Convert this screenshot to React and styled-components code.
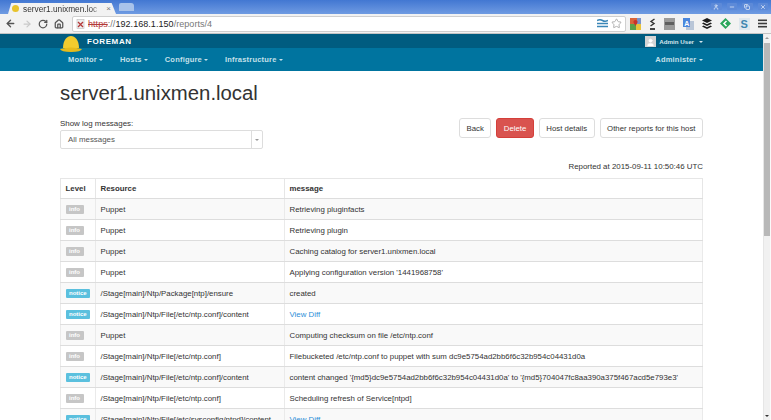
import React from 'react'
import styled, { createGlobalStyle } from 'styled-components'
import { ArrowLeft, ArrowRight, RotateCw, Home, Star, User, Minus, X, Copy } from 'lucide-react'

const Global = createGlobalStyle`
  html, body { margin: 0; padding: 0; height: 420px; overflow: hidden; background: #fff; }
  body { font-family: "Liberation Sans", Arial, sans-serif; }
`

const Window = styled.div`
  width: 771px;
  height: 420px;
  display: flex;
  flex-direction: column;
  overflow: hidden;
`

const TabStrip = styled.div`
  height: 14px;
  flex: none;
  display: flex;
  align-items: flex-end;
  padding-left: 8px;
  background: linear-gradient(#4277d2, #6f9be2);
`

const Tab = styled.div`
  width: 108px;
  height: 11px;
  display: flex;
  align-items: center;
  gap: 4px;
  padding: 0 5px 0 4px;
  box-sizing: border-box;
  background: #f2f2f2;
  border-radius: 4px 5px 0 0;
  clip-path: polygon(0 100%, 3% 0, 96% 0, 100% 100%);
  font-size: 8.3px;
  color: #333;
  white-space: nowrap;
`

const TabTitle = styled.span`
  flex: 1;
  overflow: hidden;
  -webkit-mask-image: linear-gradient(90deg, #000 85%, transparent);
  mask-image: linear-gradient(90deg, #000 85%, transparent);
`

const TabDot = styled.i`
  width: 7px;
  height: 7px;
  flex: none;
  border-radius: 50%;
  background: #e8c32c;
`

const TabClose = styled.span`
  font-size: 8px;
  color: #777;
`

const NewTab = styled.div`
  width: 15px;
  height: 8px;
  margin: 0 0 3px 3px;
  border-radius: 2px 3px 0 0;
  background: #a9c3ea;
`

const WinButtons = styled.div`
  margin-left: auto;
  align-self: flex-start;
  display: flex;
  gap: 5px;
  padding: 3px 3px 0 0;
  color: #dfe8f7;
`

const WinButton = styled.div`
  width: 10.5px;
  height: 7px;
  display: flex;
  align-items: center;
  justify-content: center;
  border-radius: 1px;
  background: #5d8ad8;
`

const Toolbar = styled.div`
  height: 20px;
  flex: none;
  display: flex;
  align-items: center;
  padding: 0 4px 0 5px;
  background: #f2f2f2;
  border-bottom: 1px solid #c4c4c4;
  box-sizing: border-box;
  color: #555;
`

const NavIcons = styled.div`
  display: flex;
  align-items: center;
  gap: 6px;
  width: 67px;
  flex: none;
`

const UrlBar = styled.div`
  width: 554px;
  flex: none;
  height: 16px;
  display: flex;
  align-items: center;
  gap: 3px;
  padding: 0 3px;
  background: #fff;
  border: 1px solid #cfcfcf;
  border-radius: 2px;
  box-sizing: border-box;
  font-size: 9px;
  letter-spacing: 0.05px;
  color: #222;
`

const Strike = styled.span`
  color: #b43a3a;
  text-decoration: line-through;
`

const Path = styled.span`
  color: #777;
`

const UrlEnd = styled.div`
  margin-left: auto;
  display: flex;
  align-items: center;
  gap: 3px;
`

const Extensions = styled.div`
  flex: 1;
  display: flex;
  align-items: center;
  justify-content: space-between;
  padding-left: 4px;
`

const ExtIcon = styled.svg`
  display: block;
  flex: none;
`

const Page = styled.div`
  flex: 1;
  min-height: 0;
  display: flex;
`

const Main = styled.div`
  flex: 1;
  min-width: 0;
  overflow: hidden;
`

const Scrollbar = styled.div`
  width: 8px;
  flex: none;
  display: flex;
  flex-direction: column;
  align-items: stretch;
  background: #f1f1f1;
  border-left: 1px solid #e6e6e6;
  border-right: 1px solid #fafafa;
  box-sizing: border-box;
  color: #444;
`

const ScrollArrow = styled.div`
  height: 9px;
  display: flex;
  align-items: center;
  justify-content: center;
  margin-top: ${p => p.$bottom ? 'auto' : '0'};
  transform: ${p => p.$up ? 'rotate(180deg)' : 'none'};
  color: ${p => p.$up ? '#999' : '#333'};
`

const Thumb = styled.div`
  height: 193px;
  background: #b8b8b8;
`

const TopBar = styled.div`
  height: 14px;
  display: flex;
  align-items: center;
  justify-content: space-between;
  padding: 0 60px;
  background: #005c80;
  color: #fff;
  position: relative;
`

const Helmet = styled.svg`
  position: absolute;
  left: 60px;
  top: 1px;
`

const Brand = styled.span`
  margin-left: 27px;
  font-size: 8px;
  font-weight: 700;
  letter-spacing: 0.6px;
`

const UserBox = styled.div`
  display: flex;
  align-items: center;
  gap: 3px;
  font-size: 6.2px;
  font-weight: 700;
  color: #d5e6ee;
`

const Avatar = styled.div`
  width: 11px;
  height: 11px;
  display: flex;
  align-items: flex-end;
  justify-content: center;
  background: #d4d4d4;
  color: #fff;
`

const Caret = styled.i`
  display: inline-block;
  width: 0;
  height: 0;
  margin-left: ${p => p.$gap ?? 2.5}px;
  vertical-align: middle;
  border-top: 2px solid currentColor;
  border-left: 2px solid transparent;
  border-right: 2px solid transparent;
`

const MenuBar = styled.div`
  height: 23px;
  display: flex;
  align-items: center;
  gap: 16.5px;
  padding: 0 60px 0 68px;
  background: #00749f;
`

const MenuItem = styled.span`
  font-size: 7.5px;
  font-weight: 700;
  letter-spacing: 0.2px;
  color: #c5e0ea;
  &:last-child { margin-left: auto; }
`

const Content = styled.div`
  padding: 0 60px;
`

const Title = styled.h1`
  margin: 0;
  padding-top: 9px;
  font-size: 20.35px;
  line-height: 26px;
  font-weight: 400;
  color: #333;
`

const Controls = styled.div`
  display: flex;
  justify-content: space-between;
  align-items: flex-start;
  margin-top: 12px;
`

const FilterLabel = styled.div`
  font-size: 7.95px;
  line-height: 11px;
  color: #333;
  margin-bottom: 1px;
`

const Select = styled.div`
  width: 203px;
  height: 19px;
  display: flex;
  align-items: center;
  justify-content: space-between;
  box-sizing: border-box;
  border: 1px solid #ddd;
  border-radius: 2px;
  padding-left: 7px;
  font-size: 7.9px;
  color: #555;
`

const SelectArrow = styled.div`
  width: 10px;
  height: 100%;
  display: flex;
  align-items: center;
  justify-content: center;
  border-left: 1px solid #ddd;
  color: #999;
`

const Buttons = styled.div`
  display: flex;
  gap: 5px;
`

const Button = styled.div`
  height: 20px;
  display: flex;
  align-items: center;
  box-sizing: border-box;
  padding: 0 6.5px;
  border: 1px solid ${p => p.$danger ? '#d43f3a' : '#ddd'};
  border-radius: 3px;
  background: ${p => p.$danger ? '#d9534f' : '#fff'};
  color: ${p => p.$danger ? '#fff' : '#333'};
  font-size: 7.8px;
`

const Reported = styled.div`
  margin-top: 12px;
  text-align: right;
  font-size: 7.9px;
  line-height: 11px;
  color: #333;
`

const Table = styled.table`
  width: 643px;
  margin-top: 6px;
  table-layout: fixed;
  border-collapse: collapse;
  font-size: 7.85px;
  color: #333;
`

const Th = styled.th`
  box-sizing: border-box;
  height: 20px;
  padding: 0 4.5px;
  text-align: left;
  font-weight: 700;
  color: #333;
  border: 1px solid #e6e6e6;
  border-bottom-color: #ddd;
  width: ${p => p.$width ? `${p.$width}px` : 'auto'};
`

const Tr = styled.tr`
  background: ${p => p.$odd ? '#f9f9f9' : '#fff'};
`

const Td = styled.td`
  height: 20px;
  padding: 0 4.5px;
  border: 1px solid #eaeaea;
  border-top-color: #ddd;
  border-bottom-color: #ddd;
  white-space: nowrap;
  overflow: hidden;
`

const Badge = styled.span`
  display: inline-block;
  padding: 0 3.5px;
  height: 9px;
  line-height: 9px;
  border-radius: 1px;
  font-size: 6px;
  font-weight: 700;
  color: #fff;
  vertical-align: middle;
  background: ${p => p.$notice ? '#5bc0de' : '#c6c6c6'};
`

const DiffLink = styled.a`
  color: #2f8fd8;
`

const rows = [
  ['info', 'Puppet', 'Retrieving pluginfacts'],
  ['info', 'Puppet', 'Retrieving plugin'],
  ['info', 'Puppet', 'Caching catalog for server1.unixmen.local'],
  ['info', 'Puppet', "Applying configuration version '1441968758'"],
  ['notice', '/Stage[main]/Ntp/Package[ntp]/ensure', 'created'],
  ['notice', '/Stage[main]/Ntp/File[/etc/ntp.conf]/content', 'View Diff'],
  ['info', 'Puppet', 'Computing checksum on file /etc/ntp.conf'],
  ['info', '/Stage[main]/Ntp/File[/etc/ntp.conf]', 'Filebucketed /etc/ntp.conf to puppet with sum dc9e5754ad2bb6f6c32b954c04431d0a'],
  ['notice', '/Stage[main]/Ntp/File[/etc/ntp.conf]/content', "content changed '{md5}dc9e5754ad2bb6f6c32b954c04431d0a' to '{md5}704047fc8aa390a375f467acd5e793e3'"],
  ['info', '/Stage[main]/Ntp/File[/etc/ntp.conf]', 'Scheduling refresh of Service[ntpd]'],
  ['notice', '/Stage[main]/Ntp/File[/etc/sysconfig/ntpd]/content', 'View Diff'],
]

const BrokenLock = () => (
  <ExtIcon width="9" height="10" viewBox="0 0 9 10">
    <rect x="1" y="0.5" width="7" height="9" fill="#eee" stroke="#bbb" strokeWidth="0.6" />
    <path d="M2 3 L7 8 M7 3 L2 8" stroke="#b43a3a" strokeWidth="1.3" />
  </ExtIcon>
)

const Waves = () => (
  <ExtIcon width="11" height="9" viewBox="0 0 11 9" fill="none" stroke="#3a86b7" strokeWidth="1.5">
    <path d="M0 1.5 Q3 0 5.5 1.5 T11 1.5" />
    <path d="M0 4.5 H11" />
    <path d="M0 7.5 H11" />
  </ExtIcon>
)

const MapExt = () => (
  <ExtIcon width="11" height="12" viewBox="0 0 11 12">
    <rect width="11" height="6" fill="#d9653a" />
    <rect y="6" width="6" height="6" fill="#5aa04a" />
    <rect x="6" y="6" width="5" height="6" fill="#e8c33c" />
    <rect x="7" width="4" height="6" fill="#7b94c9" />
    <path d="M5.5 2 A2 2 0 0 1 7.5 4.5 L5.5 8 L3.5 4.5 A2 2 0 0 1 5.5 2 Z" fill="#c8322b" />
  </ExtIcon>
)

const LampExt = () => (
  <ExtIcon width="7" height="12" viewBox="0 0 7 12" fill="none" stroke="#333" strokeWidth="1.4">
    <path d="M5.5 1 L2 3.5 L5 5.5 L1.5 8" />
    <path d="M1 11 H6" strokeWidth="1.8" />
  </ExtIcon>
)

const GrayExt = () => (
  <ExtIcon width="11" height="12" viewBox="0 0 11 12">
    <rect width="11" height="12" fill="#9a9a9a" />
    <rect x="1" y="4" width="9" height="3" fill="#5f5f5f" />
  </ExtIcon>
)

const TranslateExt = () => (
  <ExtIcon width="11" height="12" viewBox="0 0 11 12">
    <rect x="3" y="3" width="8" height="9" fill="#b9c6d8" />
    <rect width="7" height="9" fill="#4a86dc" />
    <text x="1.2" y="7.5" fontSize="7" fontWeight="700" fill="#fff" fontFamily="Liberation Sans">A</text>
  </ExtIcon>
)

const LayersExt = () => (
  <ExtIcon width="10" height="11" viewBox="0 0 10 11" fill="#1c1c1c">
    <path d="M5 0 L10 2.5 L5 5 L0 2.5 Z" />
    <path d="M1.5 4.5 L5 6.2 L8.5 4.5 L10 5.5 L5 8 L0 5.5 Z" />
    <path d="M1.5 7.5 L5 9.2 L8.5 7.5 L10 8.5 L5 11 L0 8.5 Z" />
  </ExtIcon>
)

const DiamondExt = () => (
  <ExtIcon width="11" height="11" viewBox="0 0 11 11">
    <path d="M5.5 0 L11 5.5 L5.5 11 L0 5.5 Z" fill="#2aa65a" />
    <path d="M6.5 3 L4 5.5 L6.5 8" fill="none" stroke="#fff" strokeWidth="1.5" />
  </ExtIcon>
)

const SheetExt = () => (
  <ExtIcon width="11" height="12" viewBox="0 0 11 12">
    <rect width="11" height="12" fill="#dfe8ee" />
    <text x="1.5" y="10" fontSize="11" fontWeight="700" fill="#3d86b0" fontFamily="Liberation Sans">S</text>
  </ExtIcon>
)

const BurgerExt = () => (
  <ExtIcon width="9" height="9" viewBox="0 0 9 9" fill="#3c3c3c">
    <rect y="0.5" width="9" height="1.6" />
    <rect y="3.7" width="9" height="1.6" />
    <rect y="6.9" width="9" height="1.6" />
  </ExtIcon>
)

const App = () => {
  return (
    <Window>
      <Global />
      <TabStrip>
        <Tab>
          <TabDot />
          <TabTitle>server1.unixmen.loc</TabTitle>
          <TabClose>×</TabClose>
        </Tab>
        <NewTab />
        <WinButtons>
          <WinButton><User size={6} strokeWidth={3} /></WinButton>
          <WinButton><Minus size={6} strokeWidth={3} /></WinButton>
          <WinButton><Copy size={6} strokeWidth={3} /></WinButton>
          <WinButton><X size={6} strokeWidth={3} /></WinButton>
        </WinButtons>
      </TabStrip>
      <Toolbar>
        <NavIcons>
          <ArrowLeft size={11} strokeWidth={3} />
          <ArrowRight size={10} strokeWidth={3} color="#c9c9c9" />
          <RotateCw size={10} strokeWidth={3} />
          <Home size={10} strokeWidth={3} />
        </NavIcons>
        <UrlBar>
          <BrokenLock />
          <span><Strike>https</Strike><Path>://</Path>192.168.1.150<Path>/reports/4</Path></span>
          <UrlEnd>
            <Waves />
            <Star size={11} color="#aaa" />
          </UrlEnd>
        </UrlBar>
        <Extensions>
          <MapExt />
          <LampExt />
          <GrayExt />
          <TranslateExt />
          <LayersExt />
          <DiamondExt />
          <SheetExt />
          <BurgerExt />
        </Extensions>
      </Toolbar>
      <Page>
        <Main>
          <TopBar>
            <Helmet width="22" height="18" viewBox="0 0 22 18">
              <path d="M3 13 C3 5 7 1 11 1 C15 1 19 5 19 13 Z" fill="#f2cc2e" />
              <path d="M0 14 Q11 11 22 14 Q21 17 11 17 Q1 17 0 14 Z" fill="#e6bb1c" />
            </Helmet>
            <Brand>FOREMAN</Brand>
            <UserBox>
              <Avatar><User size={9} fill="#fff" /></Avatar>
              <span>Admin User<Caret $gap={5} /></span>
            </UserBox>
          </TopBar>
          <MenuBar>
            <MenuItem>Monitor<Caret /></MenuItem>
            <MenuItem>Hosts<Caret /></MenuItem>
            <MenuItem>Configure<Caret /></MenuItem>
            <MenuItem>Infrastructure<Caret /></MenuItem>
            <MenuItem>Administer<Caret /></MenuItem>
          </MenuBar>
          <Content>
            <Title>server1.unixmen.local</Title>
            <Controls>
              <div>
                <FilterLabel>Show log messages:</FilterLabel>
                <Select>
                  All messages
                  <SelectArrow><Caret $gap={0} /></SelectArrow>
                </Select>
              </div>
              <Buttons>
                <Button>Back</Button>
                <Button $danger>Delete</Button>
                <Button>Host details</Button>
                <Button>Other reports for this host</Button>
              </Buttons>
            </Controls>
            <Reported>Reported at 2015-09-11 10:50:46 UTC</Reported>
            <Table>
              <thead>
                <tr>
                  <Th $width={35}>Level</Th>
                  <Th $width={189}>Resource</Th>
                  <Th>message</Th>
                </tr>
              </thead>
              <tbody>
                {rows.map((row, i) => (
                  <Tr key={i} $odd={i % 2 === 0}>
                    <Td><Badge $notice={row[0] === 'notice'}>{row[0]}</Badge></Td>
                    <Td>{row[1]}</Td>
                    <Td>{row[2] === 'View Diff' ? <DiffLink>View Diff</DiffLink> : row[2]}</Td>
                  </Tr>
                ))}
              </tbody>
            </Table>
          </Content>
        </Main>
        <Scrollbar>
          <ScrollArrow $up><Caret $gap={0} /></ScrollArrow>
          <Thumb />
          <ScrollArrow $bottom><Caret $gap={0} /></ScrollArrow>
        </Scrollbar>
      </Page>
    </Window>
  )
}

export default App
